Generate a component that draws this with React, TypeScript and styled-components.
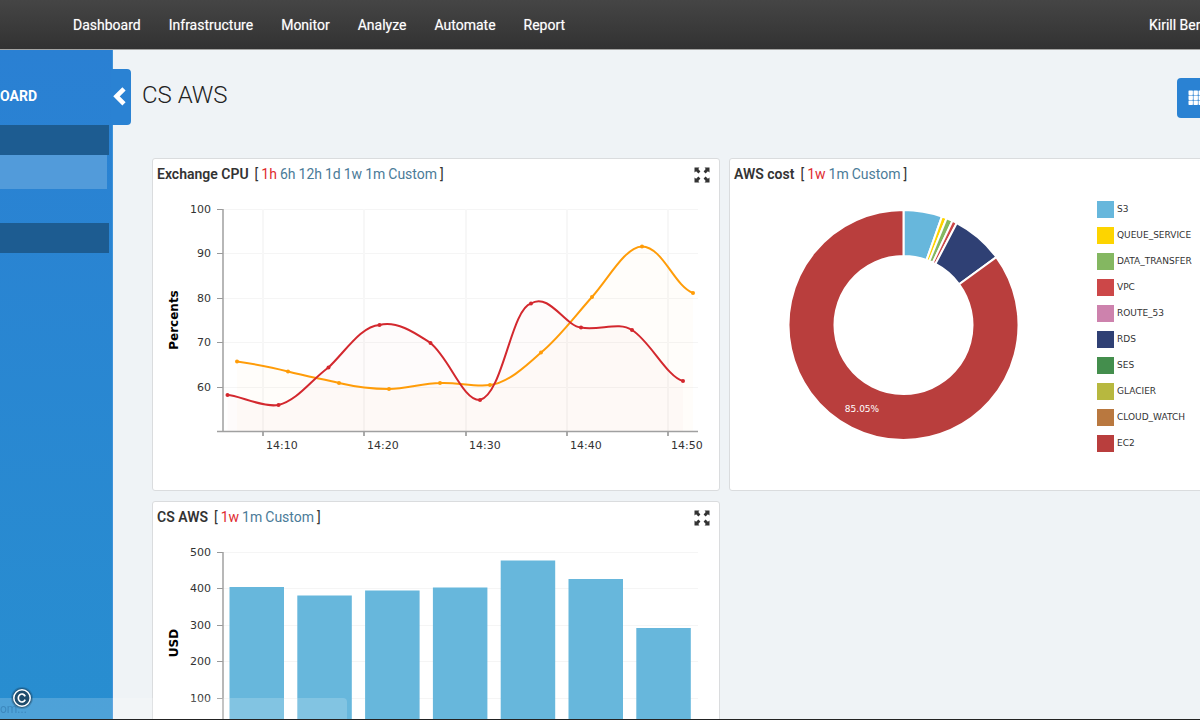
import React from 'react';
import styled, { createGlobalStyle } from 'styled-components';

const GlobalStyle = createGlobalStyle`
  * { box-sizing: border-box; }
  body {
    margin: 0;
    background: #eff3f6;
    color: #333;
    font: 14px/20px Roboto, sans-serif;
    overflow: hidden;
  }
  ul { list-style: none; margin: 0; padding: 0; }
`;

const Page = styled.div`
  display: flex;
  flex-direction: column;
  height: 100vh;
  overflow: hidden;
  border-bottom: 1px solid #222;
`;

const TopBar = styled.header`
  display: flex;
  flex: none;
  align-items: center;
  justify-content: space-between;
  height: 50px;
  padding-left: 73px;
  background: linear-gradient(#454545, #323232);
  border-bottom: 1px solid #a5a5a3;
`;

const Nav = styled.nav`
  display: flex;
  gap: 28px;
`;

const NavLink = styled.a`
  color: #fff;
  font-weight: 400;
  text-decoration: none;
  text-shadow: 0 0 1px rgba(255, 255, 255, 0.5);
  white-space: nowrap;
`;

const UserLink = styled(NavLink)`
  width: 51px;
`;

const Body = styled.div`
  display: flex;
  flex: 1;
  min-height: 0;
`;

const Sidebar = styled.aside`
  position: relative;
  flex: none;
  width: 113px;
  padding-top: 36px;
  background: linear-gradient(#2a80d3, #288ed0);
  border-right: 1px solid #3f93d9;
`;

const SidebarTitle = styled.h2`
  margin: 0 0 19px;
  color: #fff;
  font-size: 14px;
  line-height: 20px;
  font-weight: 700;
`;

const Collapse = styled.button`
  position: absolute;
  top: 19px;
  right: -19px;
  display: flex;
  align-items: center;
  width: 20px;
  height: 56px;
  padding: 0;
  border: 0;
  border-radius: 0 4px 4px 0;
  background: #2a82d3;
  svg { flex: none; }
`;

const SideItem = styled.li<{ $tone: 'dark' | 'light' }>`
  height: ${p => (p.$tone === 'dark' ? 30 : 34)}px;
  margin-right: ${p => (p.$tone === 'dark' ? 3 : 5)}px;
  margin-bottom: ${p => (p.$tone === 'dark' ? 0 : 34)}px;
  background: ${p => (p.$tone === 'dark' ? '#1d5c91' : '#529bda')};
`;

const Main = styled.main`
  flex: 1;
  min-width: 0;
  overflow: hidden;
`;

const TitleRow = styled.div`
  display: flex;
  align-items: center;
  justify-content: space-between;
  padding: 28px 0 0 29px;
`;

const Title = styled.h1`
  margin: 0 0 6px;
  color: #222;
  font-size: 24px;
  line-height: 34px;
  font-weight: 300;
`;

const GridButton = styled.button`
  width: 23px;
  height: 40px;
  padding: 0 0 0 11px;
  border: 0;
  border-radius: 4px 0 0 4px;
  background: #2a82d3;
  overflow: hidden;
  svg { display: block; }
`;

const Cards = styled.div`
  display: grid;
  grid-template-columns: repeat(2, minmax(568px, 1fr));
  gap: 10px 9px;
  padding: 40px 0 0 39px;
`;

const Card = styled.section`
  min-height: 333px;
  background: #fff;
  border: 1px solid #dadcde;
  border-radius: 3px;
`;

const CardHead = styled.header`
  display: flex;
  align-items: center;
  height: 30px;
  padding: 0 9px 0 4px;
`;

const CardTitle = styled.h3`
  margin: 0 6px 0 0;
  font-size: 14px;
  font-weight: 600;
`;

const Ranges = styled.div`
  display: flex;
  gap: 3px;
  flex: 1;
`;

const Range = styled.a<{ $active?: boolean }>`
  color: ${p => (p.$active ? '#e02b30' : '#4b7b98')};
  text-decoration: none;
`;

const ExpandButton = styled.button`
  padding: 2px 0 0;
  border: 0;
  background: none;
  color: #333;
  svg { display: block; }
`;

const Chart = styled.svg`
  display: block;
  width: 100%;
  font-family: 'DejaVu Sans', sans-serif;
  font-size: 11px;
`;

const PieBody = styled.div`
  display: flex;
`;

const Pie = styled(Chart)`
  flex: none;
  width: 367px;
`;

const Legend = styled.ul`
  padding-top: 7px;
`;

const LegendItem = styled.li`
  display: flex;
  align-items: center;
  gap: 3px;
  height: 26px;
  font: 9px/18px 'DejaVu Sans', sans-serif;
`;

const Swatch = styled.span<{ $color: string }>`
  width: 17px;
  height: 17px;
  background: ${p => p.$color};
`;

const StatusBubble = styled.div`
  position: fixed;
  left: 0;
  bottom: 1px;
  width: 347px;
  height: 21px;
  border-radius: 0 4px 0 0;
  background: rgba(255, 255, 255, 0.18);
  color: rgba(30, 90, 140, 0.35);
  font-size: 12px;
  line-height: 22px;
`;

const Copyright = styled.div`
  position: fixed;
  left: 10px;
  bottom: 10px;
  svg { display: block; }
`;

const ExpandIcon = () => (
  <svg width="16" height="16" viewBox="0 0 16 16" fill="currentColor">
    {[0, 90, 180, 270].map(a => (
      <path key={a} transform={`rotate(${a} 8 8)`} d="M0.5 0.5H5.4L4.3 2.1L6.4 4.4L4.4 6.4L2.1 4.3L0.5 5.4Z" />
    ))}
  </svg>
);

const CardHeader = ({ title, ranges, expand }: { title: string; ranges: string[]; expand?: boolean }) => (
  <CardHead>
    <CardTitle>{title}</CardTitle>
    <Ranges>
      <span>[</span>
      {ranges.map((r, i) => (
        <Range key={r} href="#" $active={i === 0}>{r}</Range>
      ))}
      <span>]</span>
    </Ranges>
    {expand && <ExpandButton aria-label={`Expand ${title}`}><ExpandIcon /></ExpandButton>}
  </CardHead>
);

type Pt = [number, number];

const ORANGE: Pt[] = [[84, 172.5], [135, 182.5], [186, 194], [236, 200], [287, 194], [337, 196], [388, 163.5], [439, 108], [489, 57.5], [540, 104]];
const RED: Pt[] = [[74.5, 206], [125.5, 216], [175.5, 178.5], [226.5, 136], [277.5, 154], [327, 211], [378, 114.5], [428, 138.5], [479, 141], [530, 192]];

const ORANGE_LINE =
  'M84 172.5C101 175 118 178 135 182.5C152 187 169 190 186 194C203 198 219 200 236 200C253 200 270 194 287 194C304 193 320 198 337 196C354 194 371 179 388 163.5C405 150 422 127 439 108C456 89 472 58 489 57.5C510 58 521 97 540 104';
const RED_LINE =
  'M74.5 206C85 206 110 219 125.5 216C145 211 158 191 175.5 178.5C192 163 208 137 226.5 136C245 131 265 146 277.5 154C297 170 310 212 327 211C350 205 358 120 378 114.5C396 103 412 137 428 138.5C446 142 466 132 479 141C497 152 514 188 530 192';

const Y_TICKS: [string, number][] = [['100', 20], ['90', 64], ['80', 109], ['70', 153], ['60', 198]];
const X_TICKS: [string, number][] = [['14:10', 110], ['14:20', 211], ['14:30', 313], ['14:40', 414], ['14:50', 515]];

const LineChart = () => (
  <Chart viewBox="0 0 566 300" role="img" aria-label="Exchange CPU, percents">
    {Y_TICKS.map(([t, y]) => (
      <g key={t}>
        <path d={`M70 ${y + 0.5}H545`} stroke="#f5f5f5" />
        <path d={`M64 ${y + 0.5}H70`} stroke="#999" />
        <text x="58" y={y + 4} textAnchor="end" fill="#333">{t}</text>
      </g>
    ))}
    {X_TICKS.map(([t, x]) => (
      <g key={t}>
        <path d={`M${x} 20V242`} stroke="#f7f7f7" strokeWidth="2" />
        <path d={`M${x} 243V247`} stroke="#aaa" strokeWidth="2" />
        <text x={x + 3} y="260" fill="#333">{t}</text>
      </g>
    ))}
    <path d={`${ORANGE_LINE}V243H84Z`} fill="#ff9900" fillOpacity="0.02" />
    <path d={`${RED_LINE}V243H74.5Z`} fill="#e03030" fillOpacity="0.02" />
    <path d="M64 242.5H545M70 20V243" fill="none" stroke="#a0a0a0" strokeWidth="1.5" />
    <path d={ORANGE_LINE} fill="none" stroke="#ff9c08" strokeWidth="2" />
    <path d={RED_LINE} fill="none" stroke="#d3282e" strokeWidth="2" />
    {ORANGE.map(([x, y]) => <circle key={x} cx={x} cy={y} r="2" fill="#ff9c08" />)}
    {RED.map(([x, y]) => <circle key={x} cx={x} cy={y} r="2" fill="#d3282e" />)}
    <text transform="translate(25 131) rotate(-90)" textAnchor="middle" fontSize="12" fontWeight="700" fill="#000">Percents</text>
  </Chart>
);

const BAR_TICKS: [string, number][] = [['500', 20], ['400', 56], ['300', 93], ['200', 129], ['100', 166]];
const BAR_TOPS = [55, 63.5, 58.5, 55.5, 28.5, 47, 96];

const BarChart = () => (
  <Chart viewBox="0 0 566 300" role="img" aria-label="CS AWS cost, USD">
    {BAR_TICKS.map(([t, y]) => (
      <g key={t}>
        <path d={`M70 ${y + 0.5}H545`} stroke="#f5f5f5" />
        <path d={`M64 ${y + 0.5}H70`} stroke="#999" />
        <text x="58" y={y + 4} textAnchor="end" fill="#333">{t}</text>
      </g>
    ))}
    <path d="M70 20V203" stroke="#a0a0a0" strokeWidth="1.5" />
    {BAR_TOPS.map((y, i) => (
      <rect key={i} x={76.5 + i * 67.8} y={y} width="54.5" height={203 - y} fill="#67b7dc" />
    ))}
    <text transform="translate(25 111) rotate(-90)" textAnchor="middle" fontSize="12" fontWeight="700" fill="#000">USD</text>
  </Chart>
);

const SLICES: [number, number, string][] = [
  [0, 19.5, '#67b7dc'],
  [19.5, 22, '#fdd400'],
  [22, 25.2, '#84b761'],
  [25.2, 27.6, '#cc4748'],
  [27.6, 53.8, '#2f4074'],
  [53.8, 360, '#b93e3d'],
];

const CX = 173.5;
const CY = 136;
const at = (deg: number, r: number) => {
  const a = (deg * Math.PI) / 180;
  return `${CX + r * Math.sin(a)} ${CY - r * Math.cos(a)}`;
};
const slicePath = (a: number, b: number) => {
  const large = b - a > 180 ? 1 : 0;
  return `M${at(a, 115)}A115 115 0 ${large} 1 ${at(b, 115)}L${at(b, 69)}A69 69 0 ${large} 0 ${at(a, 69)}Z`;
};

const LEGEND: [string, string][] = [
  ['S3', '#67b7dc'],
  ['QUEUE_SERVICE', '#fdd400'],
  ['DATA_TRANSFER', '#84b761'],
  ['VPC', '#cc4748'],
  ['ROUTE_53', '#cd82ad'],
  ['RDS', '#2f4074'],
  ['SES', '#448e4d'],
  ['GLACIER', '#b7b83f'],
  ['CLOUD_WATCH', '#b9783f'],
  ['EC2', '#b93e3d'],
];

const App = () => (
  <Page>
    <GlobalStyle />
    <TopBar>
      <Nav>
        {['Dashboard', 'Infrastructure', 'Monitor', 'Analyze', 'Automate', 'Report'].map(n => (
          <NavLink key={n} href="#">{n}</NavLink>
        ))}
      </Nav>
      <UserLink href="#">Kirill Ber</UserLink>
    </TopBar>
    <Body>
      <Sidebar>
        <SidebarTitle>OARD</SidebarTitle>
        <ul>
          <SideItem $tone="dark" />
          <SideItem $tone="light" />
          <SideItem $tone="dark" />
        </ul>
        <Collapse aria-label="Collapse sidebar">
          <svg width="17" height="22" viewBox="0 0 17 22">
            <path d="M13 2.8L5.5 10.3L13 17.8" fill="none" stroke="#fff" strokeWidth="4.6" />
          </svg>
        </Collapse>
      </Sidebar>
      <Main>
        <TitleRow>
          <Title>CS AWS</Title>
          <GridButton aria-label="Grid view">
            <svg width="17" height="16" viewBox="0 0 17 16" fill="#fff">
              {[0, 5, 10].map(y => [0, 5, 10].map(x => <rect key={`${x}-${y}`} x={x + 0.5} y={y + 0.5} width="4.4" height="4.4" rx="0.6" />))}
            </svg>
          </GridButton>
        </TitleRow>
        <Cards>
          <Card>
            <CardHeader title="Exchange CPU" ranges={['1h', '6h', '12h', '1d', '1w', '1m', 'Custom']} expand />
            <LineChart />
          </Card>
          <Card>
            <CardHeader title="AWS cost" ranges={['1w', '1m', 'Custom']} />
            <PieBody>
              <Pie viewBox="0 0 367 300" role="img" aria-label="AWS cost by service">
                {SLICES.map(([a, b, c]) => (
                  <path key={a} d={slicePath(a, b)} fill={c} stroke="#fff" strokeWidth="2" />
                ))}
                <text x="132" y="223" textAnchor="middle" fontSize="9" fill="#fff">85.05%</text>
              </Pie>
              <Legend>
                {LEGEND.map(([n, c]) => (
                  <LegendItem key={n}><Swatch $color={c} />{n}</LegendItem>
                ))}
              </Legend>
            </PieBody>
          </Card>
          <Card>
            <CardHeader title="CS AWS" ranges={['1w', '1m', 'Custom']} expand />
            <BarChart />
          </Card>
        </Cards>
      </Main>
    </Body>
    <StatusBubble>om...</StatusBubble>
    <Copyright>
      <svg width="24" height="24" viewBox="0 0 24 24" role="img" aria-label="Copyright">
        <circle cx="12" cy="12" r="11" fill="#123" opacity="0.2" />
        <circle cx="12" cy="12" r="10" fill="#123" opacity="0.35" />
        <circle cx="12" cy="12" r="8.2" fill="#1f4c6c" stroke="#fff" strokeWidth="1.5" />
        <path d="M15.2 10.4A3.6 4 0 1 0 15.2 13.6" fill="none" stroke="#fff" strokeWidth="1.7" />
      </svg>
    </Copyright>
  </Page>
);

export default App;
